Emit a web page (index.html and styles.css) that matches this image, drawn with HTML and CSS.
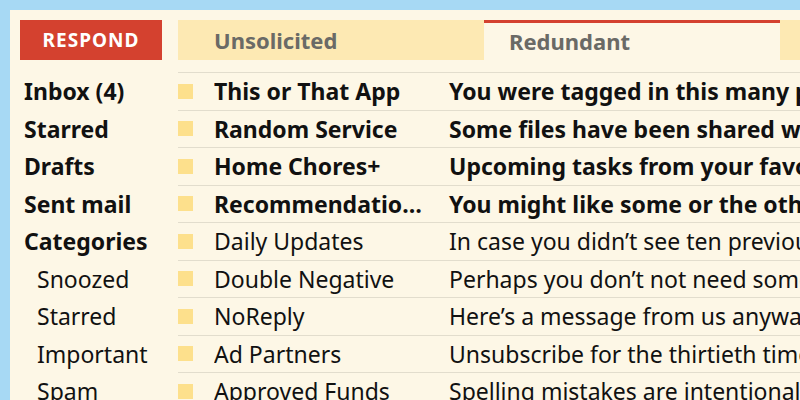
FILE: index.html
```html
<!DOCTYPE html>
<html lang="en">
<head>
    <meta charset="UTF-8">
    <title>Mail</title>
    <link rel="stylesheet" href="styles.css">
</head>
<body>
    <div class="panel">
        <aside class="sidebar">
            <button class="respond">RESPOND</button>
            <ul class="folders">
                <li class="strong">Inbox (4)</li>
                <li class="strong">Starred</li>
                <li class="strong">Drafts</li>
                <li class="strong">Sent mail</li>
                <li class="strong">Categories</li>
                <li class="sub">Snoozed</li>
                <li class="sub">Starred</li>
                <li class="sub">Important</li>
                <li class="sub">Spam</li>
            </ul>
        </aside>

        <main class="inbox">
            <div class="tabs">
                <div class="tab">Unsolicited</div>
                <div class="tab active">Redundant</div>
                <div class="tab"></div>
            </div>
            <div class="messages">
                <div class="msg unread"><span class="mark"></span><span class="from">This or That App</span><span class="subject">You were tagged in this many photos</span></div>
                <div class="msg unread"><span class="mark"></span><span class="from">Random Service</span><span class="subject">Some files have been shared with you</span></div>
                <div class="msg unread"><span class="mark"></span><span class="from">Home Chores+</span><span class="subject">Upcoming tasks from your favourites</span></div>
                <div class="msg unread"><span class="mark"></span><span class="from">Recommendatio…</span><span class="subject">You might like some or the other</span></div>
                <div class="msg"><span class="mark"></span><span class="from">Daily Updates</span><span class="subject">In case you didn’t see ten previous</span></div>
                <div class="msg"><span class="mark"></span><span class="from">Double Negative</span><span class="subject">Perhaps you don’t not need some</span></div>
                <div class="msg"><span class="mark"></span><span class="from">NoReply</span><span class="subject">Here’s a message from us anyway</span></div>
                <div class="msg"><span class="mark"></span><span class="from">Ad Partners</span><span class="subject">Unsubscribe for the thirtieth time</span></div>
                <div class="msg"><span class="mark"></span><span class="from">Approved Funds</span><span class="subject">Spelling mistakes are intentional</span></div>
            </div>
        </main>
    </div>
</body>
</html>
```

FILE: styles.css
```css
* {
    margin: 0;
    padding: 0;
    box-sizing: border-box;
}

body {
    font-family: 'Noto Sans', 'Open Sans', sans-serif;
    background: #a7d9f4;
    padding: 10px 0 0 10px;
    height: 400px;
    overflow: hidden;
    color: #111;
}

.panel {
    display: flex;
    background: #fdf7e6;
    min-height: 390px;
}

.sidebar {
    width: 168px;
    flex-shrink: 0;
    padding: 10px 0 0 10px;
}

.respond {
    display: block;
    width: 142px;
    height: 40px;
    background: #d4412f;
    color: #fff;
    border: none;
    font-family: inherit;
    font-size: 19px;
    font-weight: 700;
    letter-spacing: 1px;
}

.folders {
    list-style: none;
    margin-top: 13px;
}

.folders li {
    height: 37.5px;
    line-height: 37.5px;
    font-size: 23px;
    padding-left: 4px;
    white-space: nowrap;
}

.folders .strong {
    font-weight: 700;
}

.folders .sub {
    padding-left: 17px;
}

.inbox {
    flex: 1;
    min-width: 0;
    padding-top: 10px;
    overflow: hidden;
}

.tabs {
    display: flex;
    height: 40px;
}

.tab {
    width: 306px;
    flex-shrink: 0;
    background: #fde9b3;
    color: #6a6a66;
    font-size: 22px;
    font-weight: 700;
    padding-left: 36px;
    line-height: 40px;
}

.tab.active {
    width: 296px;
    background: #fdf7e6;
    border-top: 3px solid #d4412f;
    line-height: 37px;
    padding-left: 25px;
}

.messages {
    margin-top: 12px;
    border-top: 1px solid #e2ddcd;
}

.msg {
    display: flex;
    align-items: center;
    height: 37.5px;
    border-bottom: 1px solid #e2ddcd;
    font-size: 23px;
    white-space: nowrap;
}

.msg.unread {
    font-weight: 700;
}

.mark {
    width: 15px;
    height: 15px;
    background: #fde08c;
    flex-shrink: 0;
    margin-right: 21px;
}

.from {
    width: 235px;
    flex-shrink: 0;
    overflow: hidden;
    text-overflow: ellipsis;
    padding-right: 20px;
}
```
